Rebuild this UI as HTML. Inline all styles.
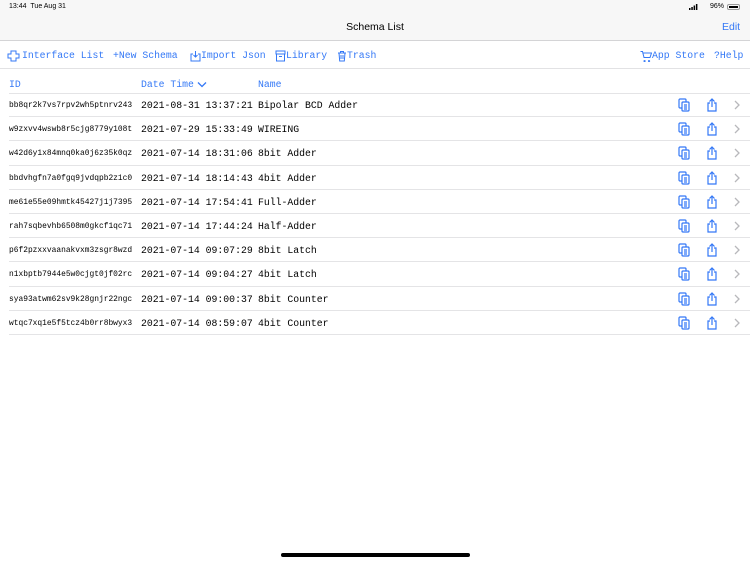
<!DOCTYPE html>
<html><head><style>
*{margin:0;padding:0;box-sizing:border-box}
body{width:750px;height:562px;background:#fff;position:relative;overflow:hidden;font-family:"Liberation Sans",sans-serif}
.hdr{position:absolute;left:0;top:0;width:750px;height:41px;background:#f7f7f7;border-bottom:1px solid #d4d4d6}
.t{position:absolute;font-size:7px;color:#000}
.bar{position:absolute;left:0;top:41px;width:750px;height:28px;border-bottom:1px solid #e2e2e4}
.m{font-family:"Liberation Mono",monospace;color:#3478f6;position:absolute;font-size:9.8px;white-space:pre}
.bi{position:absolute;top:9px}
.row{position:absolute;left:9px;right:0;height:24.2px;border-bottom:1px solid #e4e4e6;font-family:"Liberation Mono",monospace;white-space:pre}
.row .id{position:absolute;left:0;top:8px;font-size:7.9px}
.row .dt{position:absolute;left:132px;top:7px;font-size:9.8px}
.row .nm{position:absolute;left:249px;top:7px;font-size:9.8px}
.ic{position:absolute;top:5px}
</style></head><body>
<div class="hdr">
<div class="t" style="left:9px;top:3px">13:44&nbsp;&nbsp;Tue Aug 31</div>
<div class="t" style="left:710px;top:3px">96%</div>
<svg style="position:absolute;left:689px;top:4px" width="9" height="6"><rect x="0" y="4" width="1.5" height="2"/><rect x="2.3" y="3" width="1.5" height="3"/><rect x="4.6" y="1.5" width="1.5" height="4.5"/><rect x="6.9" y="0" width="1.5" height="6"/></svg>
<div style="position:absolute;left:727px;top:4px;width:13px;height:6px;border:1px solid #999;border-radius:2px;padding:1px"><div style="width:100%;height:100%;background:#000"></div></div>
<div style="position:absolute;left:0;width:750px;top:21px;text-align:center;font-size:10.5px;color:#000">Schema List</div>
<div style="position:absolute;left:722px;top:21px;font-size:10.5px;color:#3478f6">Edit</div>
</div>
<div class="bar">
<svg class="bi" style="left:7px" width="13" height="12" viewBox="0 0 13 12" fill="none" stroke="#3478f6" stroke-width="1"><path d="M4 1h5v3h3v4H9v3H4V8H1V4h3z"/></svg>
<span class="m" style="left:22px;top:9px">Interface List</span>
<span class="m" style="left:113px;top:9px">+New Schema</span>
<svg class="bi" style="left:190px" width="11" height="12" viewBox="0 0 11 12" fill="none" stroke="#3478f6" stroke-width="1"><path d="M3 4H1v7h9V4H8M5.5 1v6M3.5 5l2 2 2-2"/></svg>
<span class="m" style="left:201px;top:9px">Import Json</span>
<svg class="bi" style="left:275px" width="11" height="12" viewBox="0 0 11 12" fill="none" stroke="#3478f6" stroke-width="1"><rect x="1" y="1" width="9" height="3"/><path d="M1.5 4v7h8V4M4 6.5h3"/></svg>
<span class="m" style="left:286px;top:9px">Library</span>
<svg class="bi" style="left:337px" width="10" height="12" viewBox="0 0 10 12" fill="none" stroke="#3478f6" stroke-width="1"><path d="M1 3h8M3.5 3V1.5h3V3M2 3l.7 8h4.6L8 3M4 5v4M6 5v4"/></svg>
<span class="m" style="left:347px;top:9px">Trash</span>
<svg class="bi" style="left:640px" width="12" height="12" viewBox="0 0 12 12" fill="none" stroke="#3478f6" stroke-width="1"><path d="M0.5 1.5h2l1.5 6h6l1.5-4.5H3M4.5 10.5a.6.6 0 1 0 .1 0M9 10.5a.6.6 0 1 0 .1 0"/></svg>
<span class="m" style="left:652px;top:9px">App Store</span>
<span class="m" style="left:714px;top:9px">?Help</span>
</div>
<span class="m" style="left:9px;top:79px">ID</span>
<span class="m" style="left:141px;top:79px">Date Time</span>
<svg style="position:absolute;left:197px;top:81px" width="10" height="7" viewBox="0 0 10 7" fill="none" stroke="#3478f6" stroke-width="1.3"><path d="M1 1.5l4 4 4-4"/></svg>
<span class="m" style="left:258px;top:79px">Name</span>
<div style="position:absolute;left:9px;right:0;top:93px;border-top:1px solid #e4e4e6"></div>
<div id="rows"></div>
<div style="position:absolute;left:281px;top:553px;width:189px;height:4px;border-radius:2px;background:#000"></div>
<script>
var d=[["bb8qr2k7vs7rpv2wh5ptnrv243","2021-08-31 13:37:21","Bipolar BCD Adder"],["w9zxvv4wswb8r5cjg8779y108t","2021-07-29 15:33:49","WIREING"],["w42d6y1x84mnq0ka0j6z35k0qz","2021-07-14 18:31:06","8bit Adder"],["bbdvhgfn7a0fgq9jvdqpb2z1c0","2021-07-14 18:14:43","4bit Adder"],["me61e55e09hmtk45427j1j7395","2021-07-14 17:54:41","Full-Adder"],["rah7sqbevhb6508m0gkcf1qc71","2021-07-14 17:44:24","Half-Adder"],["p6f2pzxxvaanakvxm3zsgr8wzd","2021-07-14 09:07:29","8bit Latch"],["n1xbptb7944e5w0cjgt0jf02rc","2021-07-14 09:04:27","4bit Latch"],["sya93atwm62sv9k28gnjr22ngc","2021-07-14 09:00:37","8bit Counter"],["wtqc7xq1e5f5tcz4b0rr8bwyx3","2021-07-14 08:59:07","4bit Counter"]];
var h="";
d.forEach(function(r,i){
var top=93+i*24.2;
h+='<div class="row" style="top:'+top+'px"><span class="id">'+r[0]+'</span><span class="dt">'+r[1]+'</span><span class="nm">'+r[2]+'</span>'+
'<svg class="ic" style="left:669px" width="12" height="14" viewBox="0 0 12 14" fill="none" stroke="#3478f6" stroke-width="1.2"><rect x="1" y="1" width="7" height="9" rx="1"/><rect x="4" y="4" width="7" height="9" rx="1" fill="#fff"/><path d="M6 7h3M6 9h3M6 11h3"/></svg>'+
'<svg class="ic" style="left:697px" width="12" height="14" viewBox="0 0 12 14" fill="none" stroke="#3478f6" stroke-width="1.2"><path d="M4 5H2v8h8V5H8M6 9V1M3.5 3.5L6 1l2.5 2.5"/></svg>'+
'<svg class="ic" style="left:725px;top:7px" width="6" height="10" viewBox="0 0 6 10" fill="none" stroke="#b8b8bc" stroke-width="1.3"><path d="M1 1l4 4-4 4"/></svg></div>';
});
document.getElementById("rows").innerHTML=h;
</script>
</body></html>
